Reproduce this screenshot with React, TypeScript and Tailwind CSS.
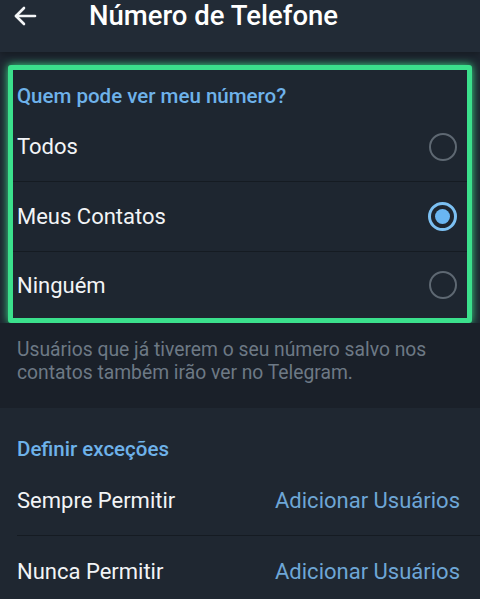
import React from "react";

const font = { fontFamily: "Roboto, 'Noto Sans', sans-serif" };

function Radio({ checked }: { checked?: boolean }) {
  if (checked) {
    return (
      <div className="w-[29px] h-[29px] rounded-full border-[3px] border-[#7cc0f2] flex items-center justify-center">
        <div className="w-[15px] h-[15px] rounded-full bg-[#6ab6f2]" />
      </div>
    );
  }
  return <div className="w-[28px] h-[28px] rounded-full border-[2.5px] border-[#5e6872]" />;
}

function Option({ label, checked, last }: { label: string; checked?: boolean; last?: boolean }) {
  return (
    <div className={`shrink-0 flex items-center justify-between pl-[4px] pr-[10px] ${last ? "h-[66px]" : "h-[70px] border-b border-[#151b22]"}`}>
      <span className="text-[22px] text-[#f2f4f6]">{label}</span>
      <Radio checked={checked} />
    </div>
  );
}

export default function App() {
  return (
    <div style={font} className="w-[480px] h-[599px] bg-[#1e2630] overflow-hidden flex flex-col">
      <div className="h-[52px] bg-[#222b36] flex items-start shrink-0 shadow-[0_3px_6px_rgba(0,0,0,0.25)] relative z-10">
        <svg className="ml-[13px] mt-[5px]" width="24" height="22" viewBox="0 0 24 22" fill="none" stroke="#f4f6f8" strokeWidth="2.6" strokeLinecap="round" strokeLinejoin="round">
          <path d="M22 11H3" />
          <path d="M11 3L3 11L11 19" />
        </svg>
        <span className="ml-[52px] text-[27.5px] font-medium text-white leading-[32px]">Número de Telefone</span>
      </div>
      <div className="shrink-0 pt-[13px] bg-[#1e2630]">
        <div className="mx-[8px] h-[258px] border-[5px] rounded-[3px] border-[#3be08c] shadow-[0_0_8px_#3be08c] bg-[#1e2630] flex flex-col">
          <div className="shrink-0 h-[42px] pl-[4px] flex items-end pb-[3px]">
            <span className="text-[20.5px] font-medium text-[#6eb2ea] leading-[26px]">Quem pode ver meu número?</span>
          </div>
          <Option label="Todos" />
          <Option label="Meus Contatos" checked />
          <Option label="Ninguém" last />
        </div>
      </div>
      <div className="shrink-0 bg-[#1a2029] h-[85px] px-[17px] pt-[15px] text-[19.3px] leading-[23px] text-[#6d7985]">
        Usuários que já tiverem o seu número salvo nos
        <br />
        contatos também irão ver no Telegram.
      </div>
      <div className="shrink-0 bg-[#1f2731]">
        <div className="h-[58px] px-[17px] flex items-end pb-[4px]">
          <span className="text-[20.5px] font-medium text-[#6eb2ea] leading-[26px]">Definir exceções</span>
        </div>
        <div className="ml-[17px] pr-[20px] h-[70px] flex items-center justify-between border-b border-[#151b22]">
          <span className="text-[22px] text-[#f2f4f6]">Sempre Permitir</span>
          <span className="text-[22px] text-[#6ea6d6]">Adicionar Usuários</span>
        </div>
        <div className="ml-[17px] pr-[20px] h-[70px] flex items-center justify-between">
          <span className="text-[22px] text-[#f2f4f6]">Nunca Permitir</span>
          <span className="text-[22px] text-[#6ea6d6]">Adicionar Usuários</span>
        </div>
      </div>
    </div>
  );
}
